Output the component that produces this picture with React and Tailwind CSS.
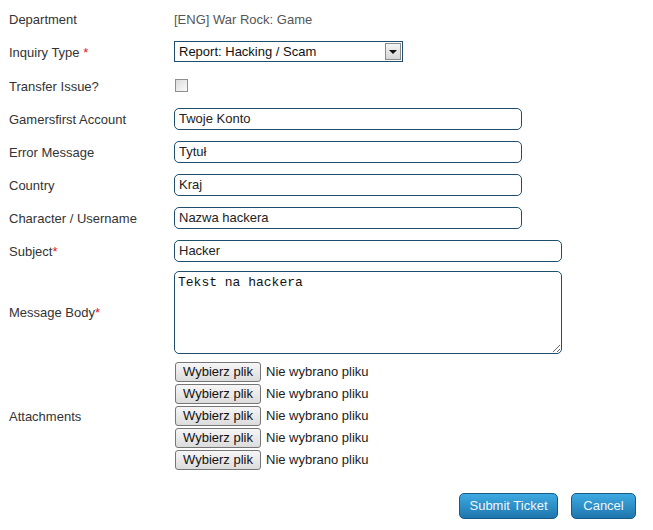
import React from "react";

const labelCls = "w-[165px] shrink-0 pt-[2px] text-[13px] text-[#333]";
const inputCls =
  "h-[22px] border border-[#1f4f6c] rounded-[5px] px-[4px] text-[13px] text-[#222] bg-white outline-none";

function Req({ space }) {
  return <span className="text-[#e8141b]">{space ? " *" : "*"}</span>;
}

function TextRow({ label, value, wide, mt }) {
  return (
    <div className={"flex items-center " + mt}>
      <div className={labelCls}>{label}</div>
      <input
        className={inputCls + (wide ? " w-[388px]" : " w-[348px]")}
        defaultValue={value}
      />
    </div>
  );
}

function FileRow() {
  return (
    <div className="flex items-center h-[20px]">
      <button className="h-[20px] w-[86px] border border-[#767676] rounded-[3px] bg-gradient-to-b from-[#f6f6f6] to-[#dcdcdc] text-[13px] text-[#111] leading-none">
        Wybierz plik
      </button>
      <span className="ml-[5px] text-[13px] text-[#222]">Nie wybrano pliku</span>
    </div>
  );
}

export default function App() {
  return (
    <div
      className="w-[653px] h-[530px] bg-white pl-[9px] pt-[8px] flex flex-col"
      style={{ fontFamily: '"Liberation Sans", Arial, sans-serif' }}
    >
      <div className="flex items-center h-[22px]">
        <div className={labelCls}>Department</div>
        <div className="pt-[2px] text-[13px] text-[#555]">[ENG] War Rock: Game</div>
      </div>

      <div className="flex items-center mt-[11px]">
        <div className={labelCls}>
          Inquiry Type<Req space />
        </div>
        <div className="flex items-center h-[21px] w-[229px] border border-[#1f4f6c] bg-white">
          <span className="flex-1 pl-[4px] text-[13px] text-[#111]">
            Report: Hacking / Scam
          </span>
          <span className="w-[16px] h-[17px] mr-[1px] border border-[#8a8a8a] bg-gradient-to-b from-[#f4f4f4] to-[#d6d6d6] flex items-center justify-center">
            <span className="w-0 h-0 border-l-[4px] border-r-[4px] border-t-[4px] border-l-transparent border-r-transparent border-t-[#111]" />
          </span>
        </div>
      </div>

      <div className="flex items-center h-[22px] mt-[12px]">
        <div className={labelCls}>Transfer Issue?</div>
        <span className="ml-[1px] w-[13px] h-[13px] border border-[#8e8e8e] bg-gradient-to-br from-[#dcdcdc] to-[#fafafa]" />
      </div>

      <TextRow label="Gamersfirst Account" value="Twoje Konto" mt="mt-[11px]" />
      <TextRow label="Error Message" value="Tytuł" mt="mt-[11px]" />
      <TextRow label="Country" value="Kraj" mt="mt-[11px]" />
      <TextRow label="Character / Username" value="Nazwa hackera" mt="mt-[11px]" />
      <div className="flex items-center mt-[11px]">
        <div className={labelCls}>
          Subject<Req />
        </div>
        <input className={inputCls + " w-[388px]"} defaultValue="Hacker" />
      </div>

      <div className="flex items-center mt-[9px]">
        <div className={labelCls}>
          Message Body<Req />
        </div>
        <textarea
          className="w-[388px] h-[83px] border border-[#1f4f6c] rounded-[5px] px-[3px] pt-[1px] text-[13px] text-[#111] bg-white outline-none resize"
          style={{ fontFamily: '"Liberation Mono", "Courier New", monospace' }}
          defaultValue="Tekst na hackera"
        />
      </div>

      <div className="flex items-center mt-[8px]">
        <div className={labelCls}>Attachments</div>
        <div className="flex flex-col gap-[2px] ml-[1px]">
          <FileRow />
          <FileRow />
          <FileRow />
          <FileRow />
          <FileRow />
        </div>
      </div>

      <div className="flex justify-end gap-[13px] mt-[23px] pr-[17px]">
        <button className="h-[26px] w-[99px] rounded-[5px] border border-[#175a84] bg-gradient-to-b from-[#3eaae2] to-[#1f76ae] text-[13px] text-[#eef7fd]">
          Submit Ticket
        </button>
        <button className="h-[26px] w-[65px] rounded-[5px] border border-[#175a84] bg-gradient-to-b from-[#3eaae2] to-[#1f76ae] text-[13px] text-[#eef7fd]">
          Cancel
        </button>
      </div>
    </div>
  );
}
